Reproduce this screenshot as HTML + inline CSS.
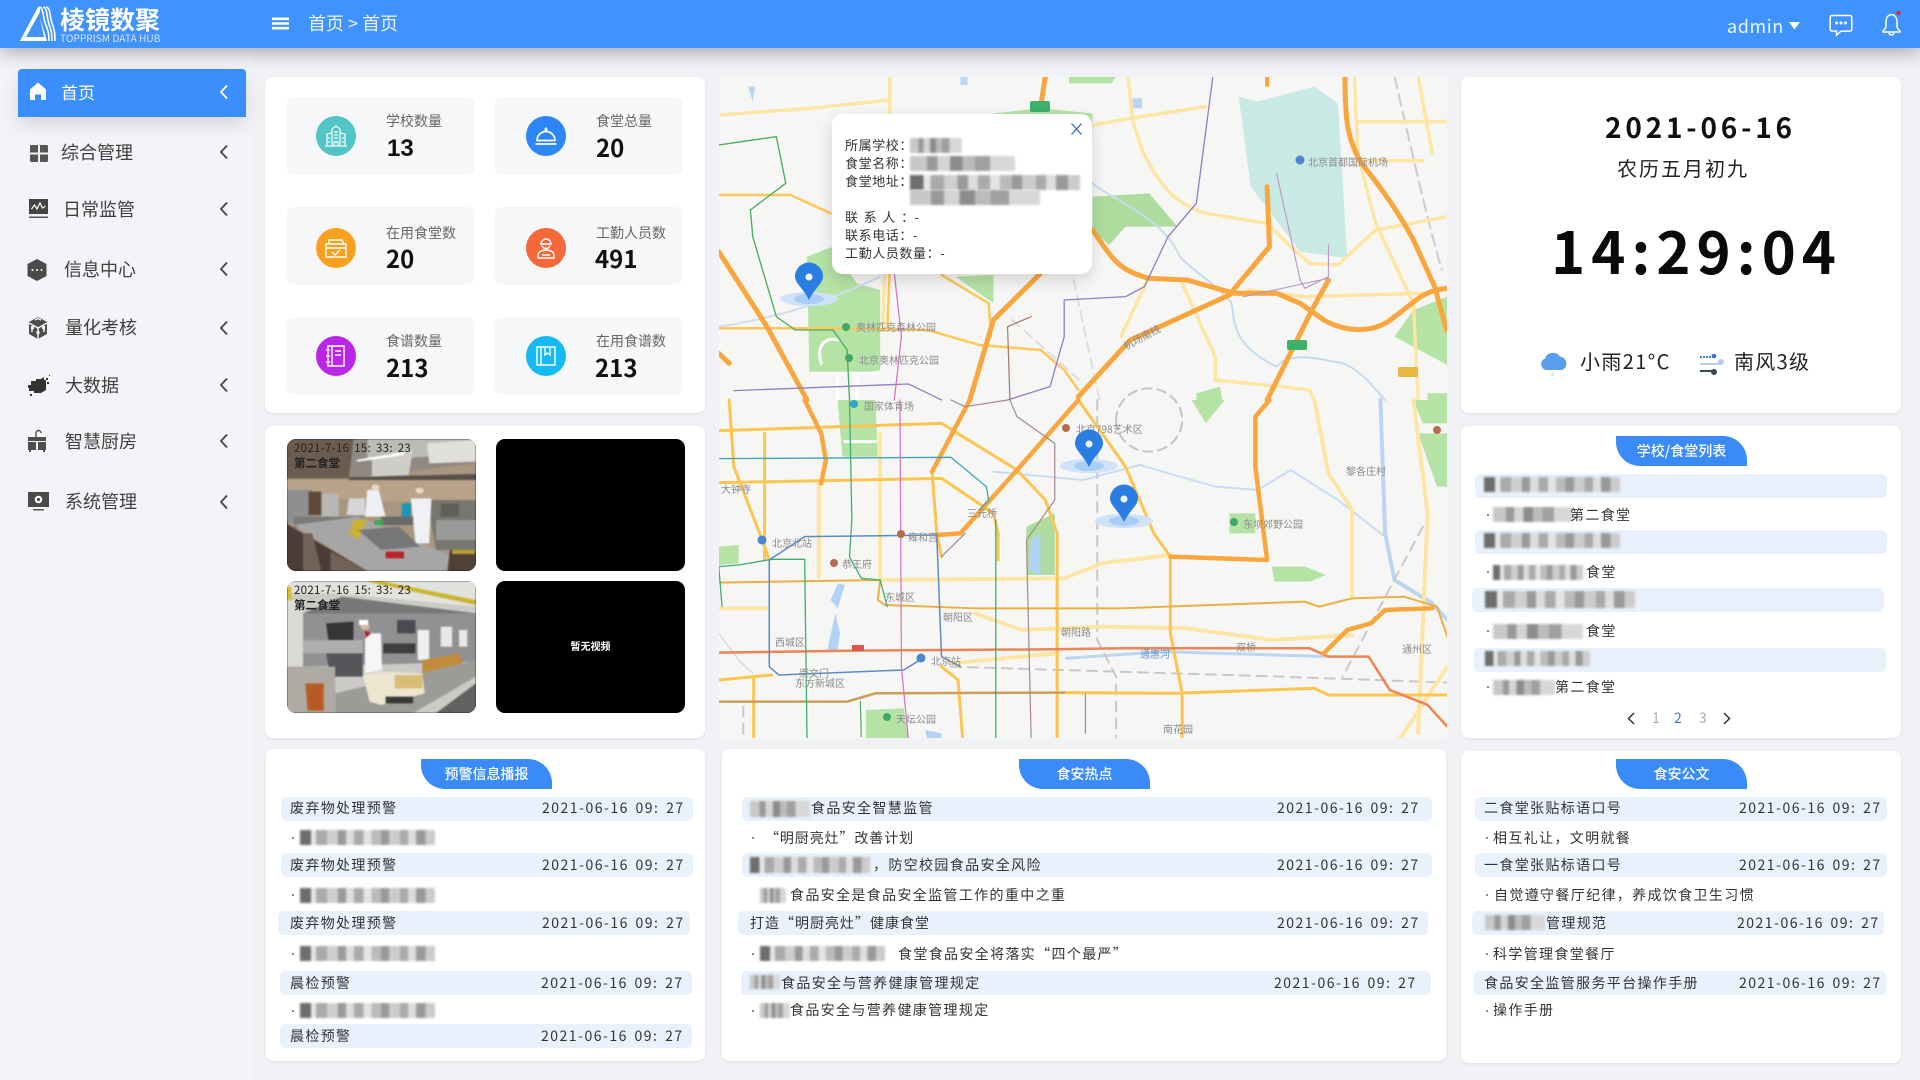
<!DOCTYPE html>
<html lang="zh-CN"><head><meta charset="utf-8"><title>棱镜数聚</title>
<style>
html,body{margin:0;padding:0;width:1920px;height:1080px;overflow:hidden;background:#f0f2f6}
body{position:relative;font-family:"Noto Sans CJK SC","Liberation Sans",sans-serif;color:#333}
.t{position:absolute;white-space:nowrap;line-height:20px}
.hd{position:absolute;left:0;top:0;width:1920px;height:48px;background:#4093fd;box-shadow:0 5px 18px rgba(0,0,0,.3);z-index:5}
.sb{position:absolute;left:0;top:48px;width:252px;height:1032px;background:#f3f4f8}
.act{position:absolute;left:18px;top:69px;width:228px;height:48px;background:#3a8ffc;border-radius:4px 4px 0 0;box-shadow:0 8px 18px rgba(0,0,0,.12)}
.mi{font-size:18px;color:#3f3f3f}
.card{position:absolute;background:#fff;border-radius:8px;box-shadow:0 1px 3px rgba(0,0,0,.08)}
.tile{position:absolute;width:187px;height:78px;background:#f6f7f9;border-radius:7px}
.circ{position:absolute;width:40px;height:40px;border-radius:50%}
.lb{font-size:14px;color:#666}
.num{font-size:24px;font-weight:700;color:#111;line-height:28px}
.vid{position:absolute;width:189px;height:132px;background:#000;border-radius:9px;overflow:hidden}
.tab{position:absolute;width:131px;height:30px;background:#3a8bf8;border-radius:0 24px 0 24px;color:#fff;font-size:14px;line-height:30px;text-align:center;font-weight:500}
.row{position:absolute;height:24px;width:412px;background:#e8f1fc;border-radius:5px}
.tx{font-size:14px;letter-spacing:1.35px;color:#333}
.dt{font-size:14px;letter-spacing:1.5px;color:#333;word-spacing:2px}
.m{position:absolute;height:15px;background:linear-gradient(90deg,#6d6d6d 0 8%,#e6e6e6 8% 12%,#aaa 12% 20%,#cfcfcf 20% 28%,#999 28% 34%,#ddd 34% 40%,#aaa 40% 47%,#e4e4e4 47% 53%,#bbb 53% 60%,#999 60% 66%,#ccc 66% 74%,#aaa 74% 80%,#ddd 80% 86%,#999 86% 93%,#ccc 93%);filter:blur(1px)}
.m2{background:linear-gradient(90deg,#c8c8c8 0 16%,#999 16% 26%,#d4d4d4 26% 38%,#8c8c8c 38% 50%,#bbb 50% 62%,#a0a0a0 62% 76%,#d8d8d8 76%)}
.dot{position:absolute;width:2px;height:2px;background:#666;border-radius:50%}
svg{position:absolute;overflow:hidden}
.map{fill:none}
.map path{vector-effect:non-scaling-stroke;stroke-linejoin:round;stroke-linecap:round}
.map path.f{stroke:none}
.map text{font-family:"Noto Sans CJK SC","Liberation Sans",sans-serif;font-size:10px;fill:#8a8a8a}
.ph{filter:blur(.7px)}
.pop{position:absolute;left:832px;top:114px;width:260px;height:160px;background:#fff;border-radius:11px;box-shadow:0 6px 16px rgba(0,0,0,.14)}
.pt{font-size:13px;letter-spacing:.6px;color:#333}
</style></head><body>

<div class="sb"></div>
<div class="hd"></div>
<svg style="left:18px;top:4px;z-index:6" width="42" height="40" viewBox="0 0 42 40"><path d="M2 37 L20 3 L22 3 L22 8 L8 33 L26 33 L22 14 L27 30 L29 37 Z" fill="#fff"/><path d="M21 3 C26 3 24 13 29 24 C31 29 31 33 31 37 M25 3 C30 4 28 13 32 23 C34 28 34 33 34 37 M28 3 C33 4 31 12 35 22 C37 27 37 33 37 37" stroke="#fff" stroke-width="1.6" fill="none"/></svg>
<div class="t" style="left:60px;top:6px;font-size:25px;font-weight:700;color:#fff;line-height:26px;z-index:6">棱镜数聚</div>
<div class="t" style="left:60px;top:31px;font-size:10.2px;color:#d6e6fd;line-height:14px;z-index:6">TOPPRISM DATA HUB</div>
<svg style="left:272px;top:17px;z-index:6" width="17" height="13" viewBox="0 0 17 13"><path d="M0 0.5h17v2.6H0zM0 5.2h17v2.6H0zM0 9.9h17v2.6H0z" fill="#fff"/></svg>
<div class="t" style="left:308px;top:13px;font-size:18px;color:#eaf3ff;z-index:6">首页 &gt; 首页</div>
<div class="t" style="left:1727px;top:16px;font-size:18px;color:#eaf3ff;letter-spacing:.6px;z-index:6">admin</div>
<svg style="left:1789px;top:22px;z-index:6" width="11" height="8" viewBox="0 0 11 8"><path d="M0 0h11L5.5 7.5z" fill="#fff"/></svg>
<svg style="left:1829px;top:14px;z-index:6" width="24" height="23" viewBox="0 0 24 23"><path d="M3 1.5h18a1.8 1.8 0 0 1 1.8 1.8v12a1.8 1.8 0 0 1-1.8 1.8H12L7.5 21.2V17.100H3a1.800 1.800 0 0 1-1.800-1.800v-12A1.800 1.800 0 0 1 3 1.500z" fill="none" stroke="#fff" stroke-width="1.5"/><circle cx="7.500" cy="9" r="1.500" fill="#fff"/><circle cx="12" cy="9" r="1.500" fill="#fff"/><circle cx="16.500" cy="9" r="1.500" fill="#fff"/></svg>
<svg style="left:1881px;top:10px;z-index:6" width="24" height="27" viewBox="0 0 24 27"><path d="M10.500 4.500C6.500 5 5 8.500 5 12v4.500c0 2-2 3.500-3 4.500v1h17v-1c-1-1-3-2.500-3-4.500V12c0-3.500-1.500-7-5.500-7.500z" fill="none" stroke="#fff" stroke-width="1.500" stroke-linejoin="round"/><path d="M8 23a2.600 2.600 0 0 0 5 0" fill="none" stroke="#fff" stroke-width="1.500"/><rect x="15.500" y="1" width="4" height="4" rx="1.500" fill="#d62a3a"/></svg>

<div class="act"></div>
<svg style="left:29px;top:82px" width="18" height="19" viewBox="0 0 18 19"><path d="M9 0.500L17 7.500V18h-5v-5.500H6V18H1V7.500z" fill="#fff"/></svg>
<div class="t" style="left:61px;top:82px;font-size:17px;color:#fff">首页</div>
<svg style="left:30px;top:145px" width="18" height="17" viewBox="0 0 18 17"><path d="M0 1.500Q0 0 1.500 0H8v7.500H0zM10 0h6.500Q18 0 18 1.500V7.500H10zM0 9.500h8V17H1.500Q0 17 0 15.500zM10 9.500h8v6q0 1.500-1.500 1.500H10z" fill="#555"/></svg>
<div class="t mi" style="left:61px;top:142px">综合管理</div>
<svg style="left:28px;top:199px" width="21" height="20" viewBox="0 0 21 20"><path d="M1 0h19v15H1z" fill="#444"/><path d="M1 17.500h19v1.500H1z" fill="#555"/><path d="M3.500 10l3-4 2.500 4 3-6 2.500 5 3-2" fill="none" stroke="#fff" stroke-width="1.200"/></svg>
<div class="t mi" style="left:63px;top:199px">日常监管</div>
<svg style="left:27px;top:259px" width="20" height="22" viewBox="0 0 20 22"><path d="M10 0l9.500 5v12L10 22 .5 17V5z" fill="#4a4a4a"/><circle cx="5.500" cy="11" r="1" fill="#fff"/><circle cx="10" cy="11" r="1" fill="#fff"/><circle cx="14.500" cy="11" r="1" fill="#fff"/></svg>
<div class="t mi" style="left:64px;top:259px">信息中心</div>
<svg style="left:28px;top:317px" width="20" height="22" viewBox="0 0 20 22"><path d="M10 0l9 5v12l-9 5-9-5V5z" fill="#4d4d4d"/><path d="M1 6l9 5 9-5M10 11v11" stroke="#f5f6fa" stroke-width="1.500" fill="none"/><path d="M7 3l3-1.500L13 3M4 12v3M16 12v3" stroke="#f5f6fa" stroke-width="1.500" fill="none"/><path d="M3 9h3v3H3zM14 9h3v3h-3zM8.500 14h3v3h-3z" fill="#f5f6fa"/></svg>
<div class="t mi" style="left:65px;top:317px">量化考核</div>
<svg style="left:27px;top:374px" width="24" height="22" viewBox="0 0 24 22"><path d="M4 7h5V5h5l3-2v3h2v10l-5 3H7v-2H2v-3H1v-3h3z" fill="#333"/><path d="M19 4h2v2h-2zM22 1h1v1h-1zM20 8h2v2h-2zM3 20h2v2H3z" fill="#333"/></svg>
<div class="t mi" style="left:65px;top:375px">大数据</div>
<svg style="left:27px;top:429px" width="20" height="24" viewBox="0 0 20 24"><path d="M1 8h18v4H1zM1 13h8v8H1zM11 13h8v8h-8zM2 21h2v2H2zM16 21h2v2h-2z" fill="#4d4d4d"/><path d="M9 8V4a2.500 2.500 0 0 1 5 0" fill="none" stroke="#4d4d4d" stroke-width="1.400"/></svg>
<div class="t mi" style="left:65px;top:431px">智慧厨房</div>
<svg style="left:28px;top:492px" width="21" height="19" viewBox="0 0 21 19"><path d="M0 0h21v15H0z" fill="#4a4a4a"/><path d="M5 17h11v1.500H5z" fill="#555"/><circle cx="10.500" cy="7.500" r="3.800" fill="#fff"/><circle cx="10.500" cy="7.500" r="1.600" fill="#4a4a4a"/></svg>
<div class="t mi" style="left:65px;top:491px">系统管理</div>
<svg style="left:218px;top:84px" width="12" height="16" viewBox="0 0 12 16"><path d="M9 1.500L3 8l6 6.500" fill="none" stroke="#fff" stroke-width="1.800"/></svg>
<svg style="left:218px;top:144px" width="12" height="16" viewBox="0 0 12 16"><path d="M9 1.500L3 8l6 6.500" fill="none" stroke="#444" stroke-width="1.800"/></svg>
<svg style="left:218px;top:201px" width="12" height="16" viewBox="0 0 12 16"><path d="M9 1.500L3 8l6 6.500" fill="none" stroke="#444" stroke-width="1.800"/></svg>
<svg style="left:218px;top:261px" width="12" height="16" viewBox="0 0 12 16"><path d="M9 1.500L3 8l6 6.500" fill="none" stroke="#444" stroke-width="1.800"/></svg>
<svg style="left:218px;top:320px" width="12" height="16" viewBox="0 0 12 16"><path d="M9 1.500L3 8l6 6.500" fill="none" stroke="#444" stroke-width="1.800"/></svg>
<svg style="left:218px;top:377px" width="12" height="16" viewBox="0 0 12 16"><path d="M9 1.500L3 8l6 6.500" fill="none" stroke="#444" stroke-width="1.800"/></svg>
<svg style="left:218px;top:433px" width="12" height="16" viewBox="0 0 12 16"><path d="M9 1.500L3 8l6 6.500" fill="none" stroke="#444" stroke-width="1.800"/></svg>
<svg style="left:218px;top:494px" width="12" height="16" viewBox="0 0 12 16"><path d="M9 1.500L3 8l6 6.500" fill="none" stroke="#444" stroke-width="1.800"/></svg>

<!-- stats card -->
<div class="card" style="left:265px;top:77px;width:440px;height:336px"></div>
<div class="tile" style="left:287px;top:97px"></div>
<div class="tile" style="left:495px;top:97px"></div>
<div class="tile" style="left:287px;top:207px"></div>
<div class="tile" style="left:495px;top:207px"></div>
<div class="tile" style="left:287px;top:317px"></div>
<div class="tile" style="left:495px;top:317px"></div>

<div class="circ" style="left:316px;top:116px;background:#51c4c6"></div>
<svg style="left:324px;top:124px" width="24" height="24" viewBox="0 0 24 24"><path d="M1 22h22M3 22V10l5-1M21 22V10l-5-1M8 22V5l4-3 4 3v17M10 8h4M10 11h4M10 14h4M10 22v-4h4v4M5 13v2M5 17v2M19 13v2M19 17v2" fill="none" stroke="#fff" stroke-width="1.200"/></svg>
<div class="t lb" style="left:386px;top:111px">学校数量</div>
<div class="t num" style="left:387px;top:135px;font-family:'Liberation Sans',sans-serif">13</div>

<div class="circ" style="left:526px;top:116px;background:#2c86f6"></div>
<svg style="left:534px;top:124px" width="24" height="24" viewBox="0 0 24 24"><path d="M3 16.500a9 9 0 0 1 18 0zM1.500 20h21M10.500 5.500h3M12 3.500v4" fill="none" stroke="#fff" stroke-width="1.700" stroke-linejoin="round"/></svg>
<div class="t lb" style="left:596px;top:111px">食堂总量</div>
<div class="t num" style="left:596px;top:133px">20</div>

<div class="circ" style="left:316px;top:228px;background:#f9a11f"></div>
<svg style="left:324px;top:236px" width="24" height="24" viewBox="0 0 24 24"><path d="M2 8h20v13H2zM2 12h20M5 8V4h4M7 4h11l2 4M8 16l3 3 5-5" fill="none" stroke="#fff" stroke-width="1.400"/></svg>
<div class="t lb" style="left:386px;top:223px">在用食堂数</div>
<div class="t num" style="left:386px;top:244px">20</div>

<div class="circ" style="left:526px;top:228px;background:#f4683a"></div>
<svg style="left:534px;top:236px" width="24" height="24" viewBox="0 0 24 24"><path d="M7 8a5 5 0 0 1 10 0zM6 8h12M8 9.500a4.200 4.200 0 0 0 8 0M4 22v-3c0-3 4-5 8-5s8 2 8 5v3zM8 19h8" fill="none" stroke="#fff" stroke-width="1.400"/></svg>
<div class="t lb" style="left:596px;top:223px">工勤人员数</div>
<div class="t num" style="left:595px;top:244px">491</div>

<div class="circ" style="left:316px;top:336px;background:#b926e8"></div>
<svg style="left:324px;top:344px" width="24" height="24" viewBox="0 0 24 24"><path d="M4 2h16v20H4zM8 2v20M11 7h6M11 11h6M2 6h4M2 12h4M2 18h4" fill="none" stroke="#fff" stroke-width="1.400"/></svg>
<div class="t lb" style="left:386px;top:331px">食谱数量</div>
<div class="t num" style="left:386px;top:353px">213</div>

<div class="circ" style="left:526px;top:336px;background:#16b9f1"></div>
<svg style="left:534px;top:344px" width="24" height="24" viewBox="0 0 24 24"><path d="M3 3h18v18H3zM7 3v18M11 3v8l2.500-2 2.500 2V3" fill="none" stroke="#fff" stroke-width="1.400"/></svg>
<div class="t lb" style="left:596px;top:331px">在用食谱数</div>
<div class="t num" style="left:595px;top:353px">213</div>

<!-- video card -->
<div class="card" style="left:265px;top:426px;width:440px;height:312px"></div>
<div class="vid" style="left:287px;top:439px">
<svg class="ph" width="189" height="132" viewBox="625 117 412 396" preserveAspectRatio="none" style="left:0;top:0">
<rect x="625" y="117" width="412" height="396" fill="#a89680"/>
<path d="M625 117H1037V190L760 235L625 232Z" fill="#8f8982"/>
<path d="M625 117H770L760 235H625Z" fill="#6a5c4e"/>
<path d="M800 117H1037V150L930 170L800 180Z" fill="#bdbbb6"/>
<path d="M930 130L1037 120V185L935 190Z" fill="#e0dfdc"/>
<path d="M810 175L900 150L890 225L810 230Z" fill="#cfcdc8"/>
<path d="M775 180L880 155L880 165L780 185Z" fill="#fff"/>
<path d="M760 232L1037 222V240L760 250Z" fill="#57504a"/>
<path d="M625 240L1037 240V315L625 290Z" fill="#b8a28a"/>
<path d="M625 270H680V370H625Z" fill="#8f8f92"/>
<path d="M672 275H700V345H672Z" fill="#5f4a38"/>
<path d="M700 280H738V360H700Z" fill="#b8b7b6"/>
<path d="M930 300H1037V450H950Z" fill="#77776f"/>
<path d="M950 360H1037V420H950Z" fill="#9a9a98"/>
<path d="M960 310H1000V350H960Z" fill="#5f5f58"/>
<path d="M640 350H790V385H640Z" fill="#7a7a78"/>
<path d="M640 375L780 350L985 470L975 513H800Z" fill="#a6a6a6"/>
<path d="M625 372L800 513H625Z" fill="#4c3c37"/>
<path d="M660 400H680L700 513H660ZM720 455L800 513H720Z" fill="#716259"/>
<path d="M800 270H825L840 350L795 350Z" fill="#eef0f4"/>
<path d="M895 295H940L935 430H905Z" fill="#f0f1f4"/>
<path d="M760 295H795V345H755Z" fill="#d4d6da"/>
<circle cx="818" cy="262" r="9" fill="#e8d8c0"/><circle cx="914" cy="272" r="9" fill="#e8d8c0"/>
<path d="M875 310H895V350H875Z" fill="#1c95b8"/>
<path d="M830 350H900V375H830Z" fill="#69696a"/>
<path d="M770 360L800 360L780 420L760 400Z" fill="#c9b037"/>
<path d="M780 390L870 380L915 440L830 450Z" fill="#777"/>
<path d="M815 360H835V375H815Z" fill="#3cab58"/>
<path d="M840 455H880V475H840Z" fill="#b9222a"/>
<path d="M980 450H1037V513H975Z" fill="#4f4138"/>
<path d="M985 450H1035V462H985Z" fill="#b8a030"/>
</svg>
<div class="t" style="left:7px;top:-1px;font-size:11.500px;letter-spacing:.3px;color:#222;word-spacing:2px">2021-7-16 15: 33: 23</div>
<div class="t" style="left:7px;top:14px;font-size:11.500px;font-weight:700;color:#222">第二食堂</div>
</div>
<div class="vid" style="left:496px;top:439px"></div>
<div class="vid" style="left:287px;top:581px">
<svg class="ph" width="189" height="132" viewBox="625 543 412 396" preserveAspectRatio="none" style="left:0;top:0">
<rect x="625" y="543" width="412" height="396" fill="#cbcac6"/>
<path d="M625 543H1037V620L740 580H625Z" fill="#e2e2df"/>
<path d="M800 545L1037 615V600L830 543Z" fill="#c9b530"/>
<path d="M625 560H635V740H625Z" fill="#d8c030"/>
<path d="M745 590L1037 640V665L660 640Z" fill="#777"/>
<path d="M650 640H1037V785L660 800Z" fill="#919193"/>
<path d="M625 600H660V800H625Z" fill="#dcdad4"/>
<path d="M710 670L770 665L770 720L715 720Z" fill="#363638"/>
<path d="M865 660L905 660L905 700L865 700Z" fill="#4a4a50"/>
<path d="M660 720H790V760H660Z" fill="#aeaeae"/>
<path d="M710 760H790V830H720Z" fill="#55555a"/>
<path d="M835 730H905V760H835Z" fill="#3e3e3e"/>
<path d="M795 700H830L832 810L795 820Z" fill="#f6f6f6"/>
<circle cx="795" cy="680" r="10" fill="#d8b89e"/><path d="M782 660H802V675H782Z" fill="#fff"/>
<path d="M795 692L808 700L796 715Z" fill="#b52028"/>
<path d="M910 690H935V780H910Z" fill="#f0f0f0"/>
<path d="M960 680H985V740H960Z" fill="#e8e8e8"/><path d="M1000 690H1018V740H1000Z" fill="#e8e8e8"/>
<path d="M920 780L1000 760L1010 800L920 825Z" fill="#c08c3c"/>
<path d="M730 880L1037 780V830L900 939H730Z" fill="#9c9c97"/>
<path d="M950 939L1037 850V939Z" fill="#626260"/>
<path d="M625 800H730V939H625Z" fill="#adaba4"/>
<path d="M665 850H705V932H670Z" fill="#b85a26"/>
<path d="M790 825L830 815L920 820L925 880L830 915L805 905Z" fill="#ede5d0"/>
<path d="M860 825H920V865H860Z" fill="#d9bc74"/>
<path d="M840 890H900V910H840Z" fill="#3a3a36"/>
</svg>
<div class="t" style="left:7px;top:-1px;font-size:11.500px;letter-spacing:.3px;color:#222;word-spacing:2px">2021-7-16 15: 33: 23</div>
<div class="t" style="left:7px;top:14px;font-size:11.500px;font-weight:700;color:#222">第二食堂</div>
</div>
<div class="vid" style="left:496px;top:581px;color:#fff;text-align:center;font-size:10px;font-weight:700;line-height:130px">暂无视频</div>

<!-- map -->
<svg class="map" style="left:719px;top:77px" width="728" height="661" viewBox="719 77 728 661">
<rect x="719" y="77" width="728" height="661" fill="#f6f6f5"/>
<g transform="translate(715,70) scale(.4719,.3333)">
<path class="f" d="M1110 80L1150 95L1270 50L1320 100L1340 565L1240 545L1135 350Z" fill="#c9e9e5"/>
<path class="f" d="M800 380L920 370L980 470L870 470L835 525L800 480Z" fill="#aedc9f"/>
<path class="f" d="M195 560L250 530L300 640L350 660L350 900L300 915L200 910Z" fill="#b5e2a5"/>
<path class="f" d="M590 130L690 115L800 130V180H590Z" fill="#b5e2a5"/>
<path class="f" d="M1480 720L1552 680V885L1440 800Z" fill="#b5e2a5"/>
<path class="f" d="M510 620L590 615V700Z" fill="#b5e2a5"/>
<path class="f" d="M1020 970L1070 950L1075 990H1020Z" fill="#b5e2a5"/>
<path class="f" d="M750 20H850L840 40H750Z" fill="#b5e2a5"/>
<path class="f" d="M1510 970H1552V990H1510Z" fill="#b5e2a5"/>
<path class="f" d="M70 50H85L80 95ZM885 85H905V115H885ZM520 20H535V45H520Z" fill="#bcd6f2"/>
<path d="M225 880C215 830 230 800 260 810M205 910H350M260 920V990M300 910V990" stroke="#fff" stroke-width="3"/>
<path d="M800 340C830 380 950 440 985 560C1010 600 1060 640 1095 700C1100 760 1100 830 1190 890C1220 840 1290 870 1330 880C1370 900 1400 960 1420 990" stroke="#c6daee" stroke-width="2"/>
<path d="M8 770C100 750 200 720 350 620" stroke="#cfdef0" stroke-width="2"/>
<path d="M1440 20C1470 200 1500 400 1540 600" stroke="#ccc" stroke-width="2" stroke-dasharray="12 6"/>
<path d="M760 630L815 990M630 750L780 940" stroke="#ddd" stroke-width="2" stroke-dasharray="10 6"/>
<path d="M8 135L200 115L370 90M370 20V130M800 165L880 145L1040 110M875 20L885 150L905 240C940 340 970 400 1040 430L1170 460L1220 530L1260 580L1320 585L1400 480L1552 440M1360 155H1550M1360 272H1500M1490 20L1520 250M1355 20L1362 250L1400 460L1480 700L1490 990M1130 660L1250 680L1500 670M990 640L1060 860V930L1200 950L1260 960L1270 990M360 610L355 770M860 800L920 620" stroke="#fde6a4" stroke-width="3.500"/>
<path d="M8 375H160L245 430M480 615L580 700L585 800M8 775H240L450 780L560 825L690 840L740 900L770 960M370 610L365 780" stroke="#fcc859" stroke-width="2.500"/>
<path d="M8 545L110 770L195 990M8 850L30 880M1335 20C1335 150 1340 210 1370 280C1410 350 1450 430 1480 510L1525 650L1550 780M800 480C840 560 850 600 920 625L1000 630L1100 670H1190L1240 700L1290 750C1340 790 1400 790 1440 740C1480 700 1500 660 1552 655M1170 350L1175 530L1110 640L1090 675L880 810L770 980M1300 630L1265 720L1170 990M700 20L690 110M690 610L590 750L540 990" stroke="#f9a63f" stroke-width="5"/>
<path d="M1170 20V45" stroke="#f9a63f" stroke-width="4"/>
<path d="M8 225L130 200L150 340L75 420L80 500L130 740L170 780H250L280 840L285 990" stroke="#46ab5a" stroke-width="1.300"/>
<path d="M1055 20L1020 400L960 500L910 650L870 680L740 690V800L710 950L620 990M40 962L410 942L480 990" stroke="#8f7ec0" stroke-width="1.300"/>
<path d="M380 610L395 800L380 990" stroke="#d36ec4" stroke-width="1.200"/>
<path d="M670 740L620 770L625 990" stroke="#a0786e" stroke-width="1.200"/>
<path d="M1190 310L1240 630L1250 655L1300 620V525M1120 680L1300 625" stroke="#b59cc8" stroke-width="1.200"/>
</g>
<g transform="translate(715,400) scale(.4719,.3333)">
<path class="f" d="M260 0H340L345 170H270Z" fill="#b5e2a5"/>
<path class="f" d="M660 380L720 340V525H660Z" fill="#aedc9f"/>
<path class="f" d="M8 440L50 435V490L8 495Z" fill="#b5e2a5"/>
<path class="f" d="M1180 500H1250L1295 525L1260 545H1185Z" fill="#b5e2a5"/>
<path class="f" d="M1090 340H1145V400H1090Z" fill="#b5e2a5"/>
<path class="f" d="M1490 100H1552V260H1530Z" fill="#b5e2a5"/>
<path class="f" d="M320 930L400 925L410 1020H320Z" fill="#b5e2a5"/>
<path class="f" d="M1010 0H1080L1040 70Z" fill="#b5e2a5"/>
<path class="f" d="M1480 0H1552V70H1500Z" fill="#b5e2a5"/>
<path class="f" d="M260 550L275 555L260 625L245 600ZM255 640L265 700L260 750H238ZM670 420L690 400L690 525L665 510ZM445 990L480 1000V1020H450Z" fill="#b3d3f6"/>
<path d="M275 125H340" stroke="#fff" stroke-width="3"/>
<path d="M590 215L780 240L900 195L1060 260L1150 270L1220 210L1320 300L1420 410" stroke="#c9dcf2" stroke-width="2"/>
<path d="M1410 0L1420 400L1440 540L1520 610L1552 660" stroke="#bcd5f2" stroke-width="4"/>
<path d="M745 775L950 755L1300 770" stroke="#bcd5f2" stroke-width="3"/>
<path d="M8 700L50 780L80 820" stroke="#ccd" stroke-width="1"/>
<path d="M810 0V720L850 830V1020M500 800L1200 830L1552 848M1500 380L1330 830M60 920V1020" stroke="#c8c8c8" stroke-width="2" stroke-dasharray="10 7" />
<path d="M850 60A70 95 0 1 0 990 60A70 95 0 1 0 850 60" stroke="#c4c4c4" stroke-width="2" stroke-dasharray="9 6"/>
<path d="M350 540L740 535L820 490L965 465M8 625H110M220 250V530M350 100V540M550 640L650 690L820 680L1000 685L1180 720L1350 705M500 790L725 760M1270 0L1300 220L1350 330V590M1480 0L1510 340L1490 1000M1450 1020L1552 800" stroke="#fde6a4" stroke-width="4"/>
<path d="M8 92L480 70L640 210L700 300L725 400V1020M8 248L480 235L590 340L600 400V480M770 0L870 200L930 400L965 470V700L990 880V1020M105 100V480M30 0L40 200L100 420L115 480M460 215L470 400L480 470M480 800L515 840L525 1020M82 830V1020M8 840L120 825M740 878L980 880L1270 865L1300 885H1552" stroke="#fcc54f" stroke-width="3"/>
<path d="M8 548L350 540M350 540L345 600L360 615L550 625L860 625L1250 605L1280 620L1350 595L1460 590L1530 620L1552 710" stroke="#e9b043" stroke-width="2"/>
<path d="M8 905H280L340 880L740 878" stroke="#c9a056" stroke-width="2.500"/>
<path d="M8 758L300 752L720 748L870 745L1260 745L1300 770H1385L1430 870L1510 915L1552 980" stroke="#ef8454" stroke-width="2.500"/>
<path d="M190 0L225 100L235 180L225 250M540 0L460 215M770 0L640 210L520 400L470 405M1175 0L1145 50V200L1170 480L965 470M1520 625L1420 630L1390 670L1340 690L1290 760" stroke="#f9a63f" stroke-width="4.500"/>
<path d="M8 176L500 172L575 260L580 300L560 330" stroke="#3ea4b4" stroke-width="1.300"/>
<path d="M285 0L290 360L285 470L310 535L350 540L365 620M195 1020L190 478H120L50 495L8 500L15 620M595 360V1020" stroke="#3fae72" stroke-width="1.300"/>
<path d="M115 480L190 410L470 405L480 770L520 800M115 480V800L135 825L400 810L440 775" stroke="#5b8ac4" stroke-width="1.500"/>
<path d="M392 0L395 800L410 1020" stroke="#d36ec4" stroke-width="1.200"/>
<path d="M625 0L640 50L720 130V300L660 420L670 1020M480 470L530 400M785 880V1000M500 0L530 20L620 0" stroke="#a58a90" stroke-width="1.200"/>
<path d="M308 905L310 1010" stroke="#46ab5a" stroke-width="1.200"/>
</g>
<!-- shields & POI -->
<rect x="1030" y="101" width="20" height="11" rx="2" fill="#3db06a"/><rect x="1287" y="340" width="20" height="10" rx="2" fill="#3db06a"/><rect x="1398" y="367" width="20" height="10" rx="2" fill="#e9b840"/>
<g>
<circle cx="1300" cy="160" r="4.500" fill="#4d86d0"/><text x="1308" y="166" fill="#7a8ca8">北京首都国际机场</text>
<circle cx="846" cy="327" r="4" fill="#3fa868"/><text x="856" y="331">奥林匹克森林公园</text>
<circle cx="849" cy="358" r="4" fill="#3fa868"/><text x="859" y="364">北京奥林匹克公园</text>
<circle cx="854" cy="404" r="4" fill="#2aa6c8"/><text x="864" y="410">国家体育场</text>
<circle cx="1066" cy="428" r="4" fill="#b86a4e"/><text x="1076" y="433">北京798艺术区</text>
<circle cx="1234" cy="522" r="4" fill="#3fa868"/><text x="1243" y="528">东坝郊野公园</text>
<circle cx="1437" cy="430" r="4" fill="#b86a4e"/>
<text x="1346" y="475">黎各庄村</text><text x="967" y="517">三元桥</text>
<circle cx="901" cy="534" r="4" fill="#b86a4e"/><text x="908" y="541">雍和宫</text>
<circle cx="762" cy="540" r="4.500" fill="#4d86d0"/><text x="772" y="547">北京北站</text>
<circle cx="834" cy="563" r="4" fill="#b86a4e"/><text x="842" y="568">恭王府</text>
<text x="885" y="601">东城区</text><text x="943" y="621">朝阳区</text><text x="775" y="646">西城区</text>
<text x="1061" y="636">朝阳路</text>
<circle cx="921" cy="658" r="4.500" fill="#4d86d0"/><text x="931" y="665">北京站</text>
<text x="799" y="677">崇文门</text><text x="795" y="687">东方新城区</text>
<circle cx="887" cy="717" r="4" fill="#3fa868"/><text x="896" y="723">天坛公园</text>
<text x="1140" y="658" style="fill:#6a98d0">通惠河</text><text x="1236" y="651">双桥</text><text x="1163" y="733">南花园</text><text x="1402" y="653">通州区</text><text x="721" y="493">大钟寺</text>
<text x="1126" y="350" transform="rotate(-28 1126 350)">机场南线</text>
<path d="M852 645h12v6h-12z" fill="#d8584a"/>
</g>
<!-- pins -->
<g>
<ellipse cx="809" cy="299" rx="29" ry="7" fill="#cfe2f8"/><ellipse cx="809" cy="299" rx="15" ry="5" fill="#a9cdf5"/>
<path d="M809 300C803 288 795 283 795 276.500A14 14 0 0 1 823 276.500C823 283 815 288 809 300Z" fill="#2a7de1"/><circle cx="809" cy="277" r="3.500" fill="#eef5fd"/>
<ellipse cx="1089" cy="466" rx="29" ry="7" fill="#cfe2f8"/><ellipse cx="1089" cy="466" rx="15" ry="5" fill="#a9cdf5"/>
<path d="M1089 467C1083 455 1075 450 1075 443.500A14 14 0 0 1 1103 443.500C1103 450 1095 455 1089 467Z" fill="#2a7de1"/><circle cx="1089" cy="444" r="3.500" fill="#eef5fd"/>
<ellipse cx="1124" cy="521" rx="29" ry="7" fill="#cfe2f8"/><ellipse cx="1124" cy="521" rx="15" ry="5" fill="#a9cdf5"/>
<path d="M1124 522C1118 510 1110 505 1110 498.500A14 14 0 0 1 1138 498.500C1138 505 1130 510 1124 522Z" fill="#2a7de1"/><circle cx="1124" cy="499" r="3.500" fill="#eef5fd"/>
</g>
</svg>
<div class="pop"></div>
<svg style="left:1070px;top:122px" width="13" height="14" viewBox="0 0 13 14"><path d="M1.500 1.500l10 11M11.500 1.500l-10 11" stroke="#3b6bb4" stroke-width="1.300" fill="none"/></svg>
<div class="t pt" style="left:845px;top:135px">所属学校：</div>
<div class="t pt" style="left:845px;top:153px">食堂名称：</div>
<div class="t pt" style="left:845px;top:171px">食堂地址：</div>
<div class="t pt" style="left:845px;top:207px;letter-spacing:.4px;word-spacing:2px">联 系 人 ：-</div>
<div class="t pt" style="left:845px;top:225px">联系电话：-</div>
<div class="t pt" style="left:845px;top:243px">工勤人员数量：-</div>
<div class="m m2" style="left:910px;top:138px;width:52px"></div>
<div class="m m2" style="left:910px;top:156px;width:105px"></div>
<div class="m" style="left:910px;top:175px;width:170px"></div>
<div class="m m2" style="left:910px;top:190px;width:130px"></div>

<!-- clock -->
<div class="card" style="left:1461px;top:77px;width:440px;height:336px"></div>
<div class="t" style="left:1605px;top:107px;font-size:28px;font-weight:700;letter-spacing:3.800px;color:#111;line-height:40px">2021-06-16</div>
<div class="t" style="left:1617px;top:153px;font-size:20px;letter-spacing:2px;color:#222;line-height:30px">农历五月初九</div>
<div class="t" style="left:1551px;top:209px;font-size:58px;font-weight:700;letter-spacing:6px;color:#0a0a0a;line-height:80px">14:29:04</div>
<svg style="left:1539px;top:350px" width="30" height="28" viewBox="0 0 30 28"><path d="M7 20A6 6 0 0 1 6 8.500 8.500 8.500 0 0 1 21 6.500 7 7 0 0 1 23 20Z" fill="#5a9ded"/><path d="M14 23l-1 3" stroke="#cfe0f4" stroke-width="2"/></svg>
<div class="t" style="left:1580px;top:346px;font-size:20px;letter-spacing:1.400px;color:#222;line-height:30px">小雨21°C</div>
<svg style="left:1699px;top:351px" width="26" height="25" viewBox="0 0 26 25"><path d="M1 6h15" stroke="#4c7fcf" stroke-width="2" stroke-dasharray="2 1"/><circle cx="15" cy="5" r="2.300" fill="#3f73c4"/><path d="M1 13h20" stroke="#b9cde8" stroke-width="2"/><circle cx="22" cy="11" r="3" fill="#b9cde8"/><path d="M1 20h13" stroke="#3b4654" stroke-width="2"/><circle cx="15" cy="21" r="3" fill="#3b4654"/></svg>
<div class="t" style="left:1734px;top:346px;font-size:20px;letter-spacing:1.300px;color:#222;line-height:30px">南风3级</div>

<!-- school list -->
<div class="card" style="left:1461px;top:426px;width:440px;height:312px"></div>
<div class="tab" style="left:1616px;top:436px">学校/食堂列表</div>
<div class="row" style="left:1475px;top:474px"></div>
<div class="m" style="left:1484px;top:477px;width:136px"></div>
<div class="dot" style="left:1487px;top:514px"></div><div class="m m2" style="left:1493px;top:507px;width:80px"></div><div class="t tx" style="left:1570px;top:505px">第二食堂</div>
<div class="row" style="left:1475px;top:530px"></div>
<div class="m" style="left:1484px;top:533px;width:136px"></div>
<div class="dot" style="left:1487px;top:571px"></div><div class="m" style="left:1493px;top:565px;width:90px"></div><div class="t tx" style="left:1586px;top:562px">食堂</div>
<div class="row" style="left:1472px;top:588px"></div>
<div class="m" style="left:1485px;top:591px;width:150px;height:17px"></div>
<div class="dot" style="left:1487px;top:630px"></div><div class="m m2" style="left:1493px;top:624px;width:90px"></div><div class="t tx" style="left:1586px;top:621px">食堂</div>
<div class="row" style="left:1474px;top:648px"></div>
<div class="m" style="left:1485px;top:651px;width:105px"></div>
<div class="dot" style="left:1487px;top:686px"></div><div class="m m2" style="left:1493px;top:680px;width:62px"></div><div class="t tx" style="left:1555px;top:677px">第二食堂</div>
<svg style="left:1626px;top:712px" width="10" height="13" viewBox="0 0 10 13"><path d="M8 1L2.500 6.500 8 12" fill="none" stroke="#333" stroke-width="1.500"/></svg>
<div class="t" style="left:1652px;top:708px;font-size:14px;color:#aaa">1</div>
<div class="t" style="left:1674px;top:708px;font-size:14px;color:#4a78c0">2</div>
<div class="t" style="left:1699px;top:708px;font-size:14px;color:#aaa">3</div>
<svg style="left:1722px;top:712px" width="10" height="13" viewBox="0 0 10 13"><path d="M2 1l5.500 5.500L2 12" fill="none" stroke="#333" stroke-width="1.500"/></svg>

<!-- warnings -->
<div class="card" style="left:266px;top:749px;width:439px;height:312px"></div>
<div class="tab" style="left:421px;top:759px">预警信息播报</div>
<div class="row" style="left:281px;top:797px"></div><div class="t tx" style="left:290px;top:798px">废弃物处理预警</div><div class="t dt" style="left:542px;top:798px">2021-06-16 09: 27</div>
<div class="dot" style="left:292px;top:837px"></div><div class="m" style="left:300px;top:830px;width:135px"></div>
<div class="row" style="left:281px;top:853px"></div><div class="t tx" style="left:290px;top:855px">废弃物处理预警</div><div class="t dt" style="left:542px;top:855px">2021-06-16 09: 27</div>
<div class="dot" style="left:292px;top:894px"></div><div class="m" style="left:300px;top:888px;width:135px"></div>
<div class="row" style="left:278px;top:911px"></div><div class="t tx" style="left:290px;top:913px">废弃物处理预警</div><div class="t dt" style="left:542px;top:913px">2021-06-16 09: 27</div>
<div class="dot" style="left:292px;top:953px"></div><div class="m" style="left:300px;top:946px;width:135px"></div>
<div class="row" style="left:280px;top:971px"></div><div class="t tx" style="left:290px;top:973px">晨检预警</div><div class="t dt" style="left:541px;top:973px">2021-06-16 09: 27</div>
<div class="dot" style="left:292px;top:1010px"></div><div class="m" style="left:300px;top:1003px;width:135px"></div>
<div class="row" style="left:280px;top:1024px"></div><div class="t tx" style="left:290px;top:1026px">晨检预警</div><div class="t dt" style="left:541px;top:1026px">2021-06-16 09: 27</div>

<!-- hot -->
<div class="card" style="left:722px;top:749px;width:724px;height:312px"></div>
<div class="tab" style="left:1019px;top:759px">食安热点</div>
<div class="row" style="left:742px;top:797px;width:690px"></div><div class="m m2" style="left:750px;top:801px;width:60px;height:16px"></div><div class="t tx" style="left:811px;top:798px">食品安全智慧监管</div><div class="t dt" style="left:1277px;top:798px">2021-06-16 09: 27</div>
<div class="dot" style="left:752px;top:837px"></div><div class="t tx" style="left:765px;top:828px;letter-spacing:.9px">“明厨亮灶”改善计划</div>
<div class="row" style="left:742px;top:853px;width:690px"></div><div class="m" style="left:750px;top:857px;width:120px;height:16px"></div><div class="t tx" style="left:873px;top:855px">，防空校园食品安全风险</div><div class="t dt" style="left:1277px;top:855px">2021-06-16 09: 27</div>
<div class="m m2" style="left:760px;top:888px;width:26px"></div><div class="t tx" style="left:790px;top:885px">食品安全是食品安全监管工作的重中之重</div>
<div class="row" style="left:738px;top:911px;width:690px"></div><div class="t tx" style="left:750px;top:913px;letter-spacing:1px">打造“明厨亮灶”健康食堂</div><div class="t dt" style="left:1277px;top:913px">2021-06-16 09: 27</div>
<div class="dot" style="left:752px;top:953px"></div><div class="m" style="left:760px;top:946px;width:125px"></div><div class="t tx" style="left:898px;top:944px">食堂食品安全将落实“四个最严”</div>
<div class="row" style="left:741px;top:971px;width:690px"></div><div class="m m2" style="left:750px;top:975px;width:30px;height:14px"></div><div class="t tx" style="left:781px;top:973px">食品安全与营养健康管理规定</div><div class="t dt" style="left:1274px;top:973px">2021-06-16 09: 27</div>
<div class="dot" style="left:752px;top:1010px"></div><div class="m m2" style="left:760px;top:1003px;width:30px"></div><div class="t tx" style="left:790px;top:1000px">食品安全与营养健康管理规定</div>

<!-- docs -->
<div class="card" style="left:1461px;top:751px;width:440px;height:312px"></div>
<div class="tab" style="left:1616px;top:759px">食安公文</div>
<div class="row" style="left:1475px;top:797px"></div><div class="t tx" style="left:1484px;top:798px">二食堂张贴标语口号</div><div class="t dt" style="left:1739px;top:798px">2021-06-16 09: 27</div>
<div class="dot" style="left:1486px;top:837px"></div><div class="t tx" style="left:1493px;top:828px">相互礼让，文明就餐</div>
<div class="row" style="left:1475px;top:853px"></div><div class="t tx" style="left:1484px;top:855px">一食堂张贴标语口号</div><div class="t dt" style="left:1739px;top:855px">2021-06-16 09: 27</div>
<div class="dot" style="left:1486px;top:894px"></div><div class="t tx" style="left:1494px;top:885px">自觉遵守餐厅纪律，养成饮食卫生习惯</div>
<div class="row" style="left:1472px;top:911px"></div><div class="m m2" style="left:1485px;top:915px;width:60px"></div><div class="t tx" style="left:1546px;top:913px">管理规范</div><div class="t dt" style="left:1737px;top:913px">2021-06-16 09: 27</div>
<div class="dot" style="left:1486px;top:953px"></div><div class="t tx" style="left:1493px;top:944px">科学管理食堂餐厅</div>
<div class="row" style="left:1474px;top:971px"></div><div class="t tx" style="left:1484px;top:973px">食品安全监管服务平台操作手册</div><div class="t dt" style="left:1739px;top:973px">2021-06-16 09: 27</div>
<div class="dot" style="left:1486px;top:1010px"></div><div class="t tx" style="left:1493px;top:1000px">操作手册</div>
</body></html>
